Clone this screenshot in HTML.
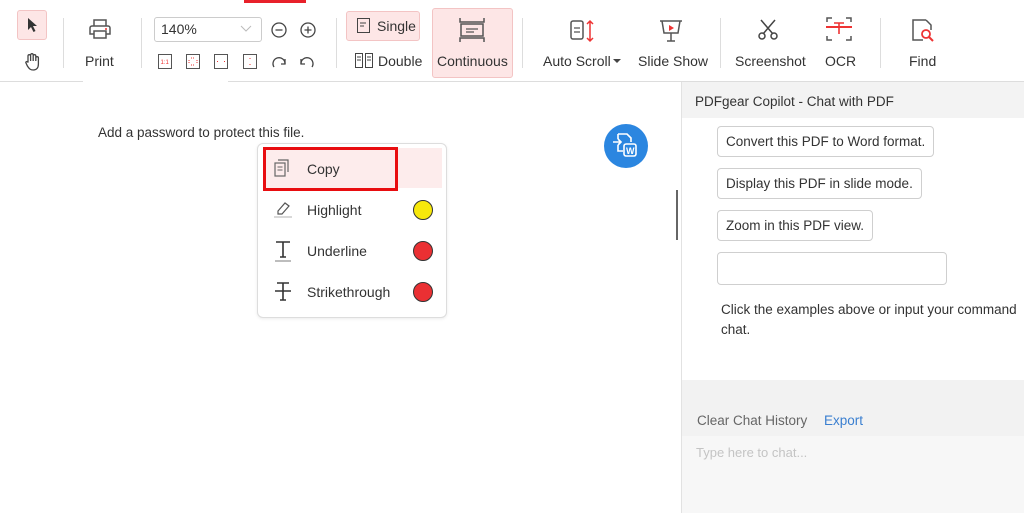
<!DOCTYPE html>
<html><head><style>
*{margin:0;padding:0;box-sizing:border-box}
body{width:1024px;height:513px;position:relative;overflow:hidden;background:#fff;font-family:"Liberation Sans",sans-serif;color:#333;font-size:14px}
.a{position:absolute}
.t{position:absolute;font-size:14px;color:#333;white-space:nowrap}
.sep{position:absolute;width:1px;background:#ddd;top:18px;height:50px}
.chip{position:absolute;border:1px solid #cfcfcf;border-radius:4px;background:#fff;font-size:13.5px;color:#333;padding:0 8px;height:31px;line-height:29px;left:717px}
svg{position:absolute;overflow:visible}
</style></head><body>
<div class="a" style="left:244px;top:0;width:62px;height:3px;background:#e8202a"></div>
<!-- toolbar bottom -->
<div class="a" style="left:0;top:81px;width:83px;height:1px;background:#ddd"></div>
<div class="a" style="left:228px;top:81px;width:796px;height:1px;background:#ddd"></div>

<div class="a" style="left:17px;top:10px;width:30px;height:30px;background:#fde6e6;border:1px solid #f3c4c4;border-radius:3px"></div>
<svg style="left:27px;top:17px" width="12" height="16"><path d="M1 1 L1 13 L4 10 L6.5 15 L8.5 14 L6 9 L10 9 Z" fill="#333"/></svg>
<svg style="left:24px;top:52px" width="18" height="20"><path d="M4 10 V4 a1.3 1.3 0 0 1 2.6 0 V9 V3 a1.3 1.3 0 0 1 2.6 0 V9 V4 a1.3 1.3 0 0 1 2.6 0 V9 V6 a1.3 1.3 0 0 1 2.6 0 V12 c0 4 -2 6 -5 6 c-3 0 -4 -1 -6 -4 L2 11 c-.6-1 .6-2 1.6-1 Z" fill="none" stroke="#444" stroke-width="1.3"/></svg>
<div class="sep" style="left:63px"></div>

<svg style="left:88px;top:18px" width="24" height="22"><path d="M6 8V2h12v6M4 8h16a2 2 0 0 1 2 2v6h-4M6 16H2v-6a2 2 0 0 1 2-2M6 13h12v7H6z" fill="none" stroke="#555" stroke-width="1.5"/><circle cx="18" cy="11" r="1" fill="#e33"/></svg>
<div class="t" style="left:85px;top:53px">Print</div>
<div class="sep" style="left:141px"></div>

<div class="a" style="left:154px;top:17px;width:108px;height:25px;border:1px solid #ccc;border-radius:3px"></div>
<div class="t" style="left:161px;top:21px">140%</div>
<svg style="left:241px;top:26px" width="10" height="6"><path d="M0 0l5 5 5-5" fill="none" stroke="#bbb"/></svg>
<svg style="left:271px;top:22px" width="16" height="16"><circle cx="8" cy="8" r="7" fill="none" stroke="#444" stroke-width="1.3"/><path d="M4.5 8h7" stroke="#444" stroke-width="1.3"/></svg>
<svg style="left:300px;top:22px" width="16" height="16"><circle cx="8" cy="8" r="7" fill="none" stroke="#444" stroke-width="1.3"/><path d="M4.5 8h7M8 4.5v7" stroke="#444" stroke-width="1.3"/></svg>
<svg style="left:158px;top:54px" width="14" height="15"><rect x=".5" y=".5" width="13" height="14" fill="none" stroke="#555"/><text x="2.5" y="10" font-size="6" fill="#e33" font-family="Liberation Sans">1:1</text></svg>
<svg style="left:186px;top:54px" width="14" height="15"><rect x=".5" y=".5" width="13" height="14" fill="none" stroke="#555"/><path d="M5 4h4M5 11h4M3 6v3M11 6v3" stroke="#e33" stroke-dasharray="1 1"/></svg>
<svg style="left:214px;top:54px" width="14" height="15"><rect x=".5" y=".5" width="13" height="14" fill="none" stroke="#555"/><path d="M3 7.5h1M10 7.5h1" stroke="#e33"/></svg>
<svg style="left:243px;top:54px" width="14" height="15"><rect x=".5" y=".5" width="13" height="14" fill="none" stroke="#555"/><path d="M7 4v1M7 10v1" stroke="#e33"/></svg>
<svg style="left:271px;top:55px" width="16" height="14"><path d="M3 12a6 6 0 1 1 11-3" fill="none" stroke="#444" stroke-width="1.3"/><path d="M14 4v5h-4" fill="none" stroke="#444" stroke-width="1.3"/></svg>
<svg style="left:299px;top:55px" width="16" height="14"><path d="M13 12a6 6 0 1 0 -11-3" fill="none" stroke="#444" stroke-width="1.3"/><path d="M2 4v5h4" fill="none" stroke="#444" stroke-width="1.3"/></svg>
<div class="sep" style="left:336px"></div>

<div class="a" style="left:346px;top:11px;width:74px;height:30px;background:#fde6e6;border:1px solid #f3c4c4;border-radius:3px"></div>
<svg style="left:357px;top:18px" width="13" height="15"><rect x=".5" y=".5" width="12" height="14" fill="none" stroke="#444"/><path d="M3 5h6M3 8h4" stroke="#444"/></svg>
<div class="t" style="left:377px;top:18px">Single</div>
<svg style="left:355px;top:53px" width="18" height="15"><rect x=".5" y=".5" width="7" height="14" fill="none" stroke="#444"/><rect x="10.5" y=".5" width="7" height="14" fill="none" stroke="#444"/><path d="M2 4h4M12 4h4M2 7h4M12 7h4" stroke="#444"/></svg>
<div class="t" style="left:378px;top:53px">Double</div>
<div class="a" style="left:432px;top:8px;width:81px;height:70px;background:#fde6e6;border:1px solid #f3c4c4;border-radius:3px"></div>
<svg style="left:459px;top:17px" width="26" height="26"><path d="M1 1v4h24V1M1 25v-4h24v4" fill="none" stroke="#555" stroke-width="1.5"/><rect x="2" y="7" width="22" height="12" fill="none" stroke="#555" stroke-width="1.5"/><path d="M7 12h12M7 15h8" stroke="#555" stroke-width="1.3"/></svg>
<div class="t" style="left:437px;top:53px">Continuous</div>
<div class="sep" style="left:522px"></div>

<svg style="left:570px;top:19px" width="28" height="24"><rect x="1" y="2" width="12" height="18" rx="2" fill="none" stroke="#555" stroke-width="1.5"/><path d="M4 9h6M4 13h6" stroke="#555" stroke-width="1.3"/><path d="M20 2v20M17 5l3-3 3 3M17 19l3 3 3-3" fill="none" stroke="#e33" stroke-width="1.5"/></svg>
<div class="t" style="left:543px;top:53px">Auto Scroll</div>
<svg style="left:613px;top:59px" width="8" height="5"><path d="M0 0h8L4 4z" fill="#444"/></svg>
<svg style="left:659px;top:19px" width="24" height="24"><path d="M1 2h22M3 2l2 12h14l2-12M12 14v8M8 22h8" fill="none" stroke="#555" stroke-width="1.5"/><path d="M10 6l5 3-5 3z" fill="#e33"/></svg>
<div class="t" style="left:638px;top:53px">Slide Show</div>
<div class="sep" style="left:720px"></div>

<svg style="left:757px;top:18px" width="22" height="22"><path d="M4 2l12 14M18 2L6 16" stroke="#444" stroke-width="1.5"/><circle cx="5" cy="18" r="3" fill="none" stroke="#444" stroke-width="1.5"/><circle cx="17" cy="18" r="3" fill="none" stroke="#444" stroke-width="1.5"/></svg>
<div class="t" style="left:735px;top:53px">Screenshot</div>
<svg style="left:826px;top:17px" width="26" height="24"><path d="M1 5V1h5M20 1h5v4M1 19v4h5M20 23h5v-4" fill="none" stroke="#555" stroke-width="1.5"/><path d="M0 10h26" stroke="#e33" stroke-width="2"/><path d="M8 6h10M13 6v11" stroke="#e33" stroke-width="1.6"/></svg>
<div class="t" style="left:825px;top:53px">OCR</div>
<div class="sep" style="left:880px"></div>
<svg style="left:911px;top:19px" width="24" height="24"><path d="M15 1H2v20h10M15 1l5 5v5" fill="none" stroke="#555" stroke-width="1.5"/><circle cx="15" cy="15" r="4" fill="none" stroke="#e33" stroke-width="1.8"/><path d="M18 18l4 4" stroke="#e33" stroke-width="2"/></svg>
<div class="t" style="left:909px;top:53px">Find</div>

<!-- document -->
<div class="t" style="left:98px;top:125px;font-size:13.5px">Add a password to protect this file.</div>
<div class="a" style="left:604px;top:124px;width:44px;height:44px;border-radius:50%;background:#2b86e0"></div>
<svg style="left:612px;top:133px" width="28" height="26"><path d="M6 1h9l4 4v4M6 1v5" fill="none" stroke="#fff" stroke-width="1.6"/><path d="M1 9h8M6 6l3 3-3 3" fill="none" stroke="#fff" stroke-width="1.6"/><path d="M6 12v6h5" fill="none" stroke="#fff" stroke-width="1.6"/><rect x="12" y="11" width="12" height="12" rx="2" fill="none" stroke="#fff" stroke-width="1.6"/><text x="14" y="21" font-size="9" font-weight="bold" fill="#fff" font-family="Liberation Sans">W</text></svg>
<div class="a" style="left:676px;top:190px;width:2px;height:50px;background:#666"></div>

<!-- context menu -->
<div class="a" style="left:257px;top:143px;width:190px;height:175px;border:1px solid #ddd;border-radius:6px;background:#fff;box-shadow:0 1px 3px rgba(0,0,0,.08)"></div>
<div class="a" style="left:263px;top:148px;width:179px;height:40px;background:#fdecec"></div>
<div class="a" style="left:263px;top:147px;width:135px;height:44px;border:3px solid #e80d10"></div>
<svg style="left:274px;top:159px" width="16" height="18"><rect x="1" y="4" width="10" height="13" fill="none" stroke="#666" stroke-width="1.2"/><path d="M4 1h10v12" fill="none" stroke="#666" stroke-width="1.2"/><path d="M3.5 8h5M3.5 11h5" stroke="#666"/></svg>
<div class="t" style="left:307px;top:161px">Copy</div>
<svg style="left:274px;top:200px" width="18" height="18"><path d="M4 11l7-8 4 3-7 8H4z" fill="none" stroke="#555" stroke-width="1.2"/><path d="M0 17h18" stroke="#ccc" stroke-width="1.5"/></svg>
<div class="t" style="left:307px;top:202px">Highlight</div>
<div class="a" style="left:413px;top:200px;width:20px;height:20px;border-radius:50%;background:#f7e80b;border:1.5px solid #333"></div>
<svg style="left:274px;top:240px" width="18" height="22"><path d="M2 2h14M9 2v15M6 17h6" fill="none" stroke="#333" stroke-width="1.6"/><path d="M1 21h16" stroke="#999" stroke-width="1.3"/></svg>
<div class="t" style="left:307px;top:243px">Underline</div>
<div class="a" style="left:413px;top:241px;width:20px;height:20px;border-radius:50%;background:#ea3033;border:1.5px solid #333"></div>
<svg style="left:274px;top:281px" width="18" height="22"><path d="M3 2h12M9 2v17M6 19h6M1 10h16" fill="none" stroke="#333" stroke-width="1.6"/></svg>
<div class="t" style="left:307px;top:284px">Strikethrough</div>
<div class="a" style="left:413px;top:282px;width:20px;height:20px;border-radius:50%;background:#ea3033;border:1.5px solid #333"></div>

<!-- right panel -->
<div class="a" style="left:681px;top:82px;width:1px;height:431px;background:#e2e2e2"></div>
<div class="a" style="left:682px;top:82px;width:342px;height:36px;background:#f3f3f3"></div>
<div class="t" style="left:695px;top:94px;font-size:13.5px">PDFgear Copilot - Chat with PDF</div>
<div class="chip" style="top:126px">Convert this PDF to Word format.</div>
<div class="chip" style="top:168px">Display this PDF in slide mode.</div>
<div class="chip" style="top:210px">Zoom in this PDF view.</div>
<div class="chip" style="top:252px;width:230px;height:33px"></div>
<div class="t" style="left:721px;top:300px;font-size:13.5px;line-height:20px">Click the examples above or input your command<br>chat.</div>
<div class="a" style="left:682px;top:380px;width:342px;height:56px;background:#f2f2f2"></div>
<div class="a" style="left:682px;top:436px;width:342px;height:77px;background:#f7f7f7"></div>
<div class="t" style="left:697px;top:413px;color:#666;font-size:13.5px">Clear Chat History</div>
<div class="t" style="left:824px;top:413px;color:#3a7fd0;font-size:13.5px">Export</div>
<div class="t" style="left:696px;top:445px;color:#c4c4c4;font-size:13px">Type here to chat...</div>
</body></html>
